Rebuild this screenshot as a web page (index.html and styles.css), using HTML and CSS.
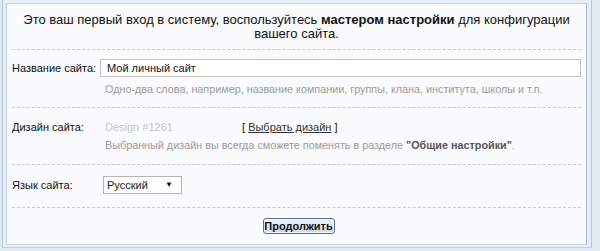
FILE: index.html
```html
<!DOCTYPE html>
<html lang="ru">
<head>
<meta charset="utf-8">
<title>Мастер настройки</title>
<link rel="stylesheet" href="styles.css">
</head>
<body>
<div class="frame">
  <div class="panel">
    <p class="intro">Это ваш первый вход в систему, воспользуйтесь <b>мастером настройки</b> для конфигурации вашего сайта.</p>
    <div class="row row-name">
      <div class="label label-input">Название сайта:</div>
      <div class="field">
        <div class="input">Мой личный сайт</div>
        <div class="hint">Одно-два слова, например, название компании, группы, клана, института, школы и т.п.</div>
      </div>
    </div>
    <div class="row row-design">
      <div class="label">Дизайн сайта:</div>
      <div class="field">
        <div class="design-line"><span class="design-name">Design #1261</span><span class="choose">[ <a class="link">Выбрать дизайн</a> ]</span></div>
        <div class="hint hint-design">Выбранный дизайн вы всегда сможете поменять в разделе <b>"Общие настройки"</b>.</div>
      </div>
    </div>
    <div class="row row-lang">
      <div class="label label-input">Язык сайта:</div>
      <div class="field">
        <div class="select"><span>Русский</span><span class="arrow">▼</span></div>
      </div>
    </div>
    <div class="row row-submit">
      <button class="btn" type="button">Продолжить</button>
    </div>
  </div>
</div>
</body>
</html>
```
FILE: styles.css
```css
* { box-sizing: border-box; }
html, body {
  margin: 0;
  padding: 0;
}
body {
  background: #e2eaf4;
  font-family: "Liberation Sans", Arial, sans-serif;
  color: #111;
  width: 600px;
  height: 251px;
  overflow: hidden;
}
.frame {
  margin-left: 2px;
  width: 590px;
  border-left: 1px solid #b7c6d9;
  border-right: 1px solid #b7c6d9;
  border-bottom: 1px solid #c3d0e0;
  background: #e7eef7;
  padding: 3px 4px 2px 3px;
}
.panel {
  background: #fafbfd;
  border: 1px solid #c6d3e3;
  border-right-color: #a9bcd3;
  padding: 0 5px;
}
.intro {
  margin: 0;
  padding: 9px 0 8px;
  text-align: center;
  font-size: 13px;
  line-height: 14px;
  color: #111;
}
.intro b { color: #111; }
.row {
  border-top: 1px dashed #c9c9c9;
  display: flex;
  align-items: flex-start;
}
.label {
  width: 88px;
  flex: none;
  font-size: 11px;
  line-height: 16px;
  color: #111;
}
.field {
  flex: 1;
  min-width: 0;
}
.row-name { padding: 9px 0 11px; }
.row-name .label-input { padding-top: 1px; }
.input {
  height: 18px;
  border: 1px solid #c3c3c3;
  background: #fff;
  font-size: 11px;
  line-height: 16px;
  padding-left: 6px;
  color: #111;
}
.hint {
  font-size: 10.8px;
  line-height: 14px;
  color: #9a9a9a;
  padding-left: 5px;
  margin-top: 5px;
  white-space: nowrap;
}
.row-design { padding: 11px 0 12px; }
.design-line {
  display: flex;
  font-size: 11px;
  line-height: 16px;
}
.design-name {
  width: 142px;
  padding-left: 5px;
  color: #c6c6c6;
}
.choose { color: #111; }
.link {
  color: #333;
  text-decoration: underline;
}
.hint-design { margin-top: 3px; }
.hint-design b { color: #555; }
.row-lang { padding: 11px 0 13px; }
.row-lang .label-input { padding-top: 1px; }
.select {
  margin-left: 3px;
  width: 79px;
  height: 18px;
  border: 1px solid #b5b5b5;
  background: #fff;
  display: flex;
  justify-content: space-between;
  align-items: center;
  font-size: 11px;
  line-height: 16px;
  padding: 0 8px 0 3px;
  color: #222;
}
.arrow {
  font-size: 8px;
  color: #111;
}
.row-submit {
  justify-content: center;
  padding: 10px 0 10px;
}
.btn {
  width: 72px;
  height: 16px;
  padding: 0;
  margin-left: 4px;
  font-family: "Liberation Sans", Arial, sans-serif;
  font-size: 11px;
  font-weight: bold;
  color: #111;
  line-height: 14px;
  border: 1px solid #5d6f86;
  border-radius: 3px;
  background: linear-gradient(#eef4fb, #c9d8ea);
  box-shadow: inset 0 0 0 1px #f3f7fc;
}
```
